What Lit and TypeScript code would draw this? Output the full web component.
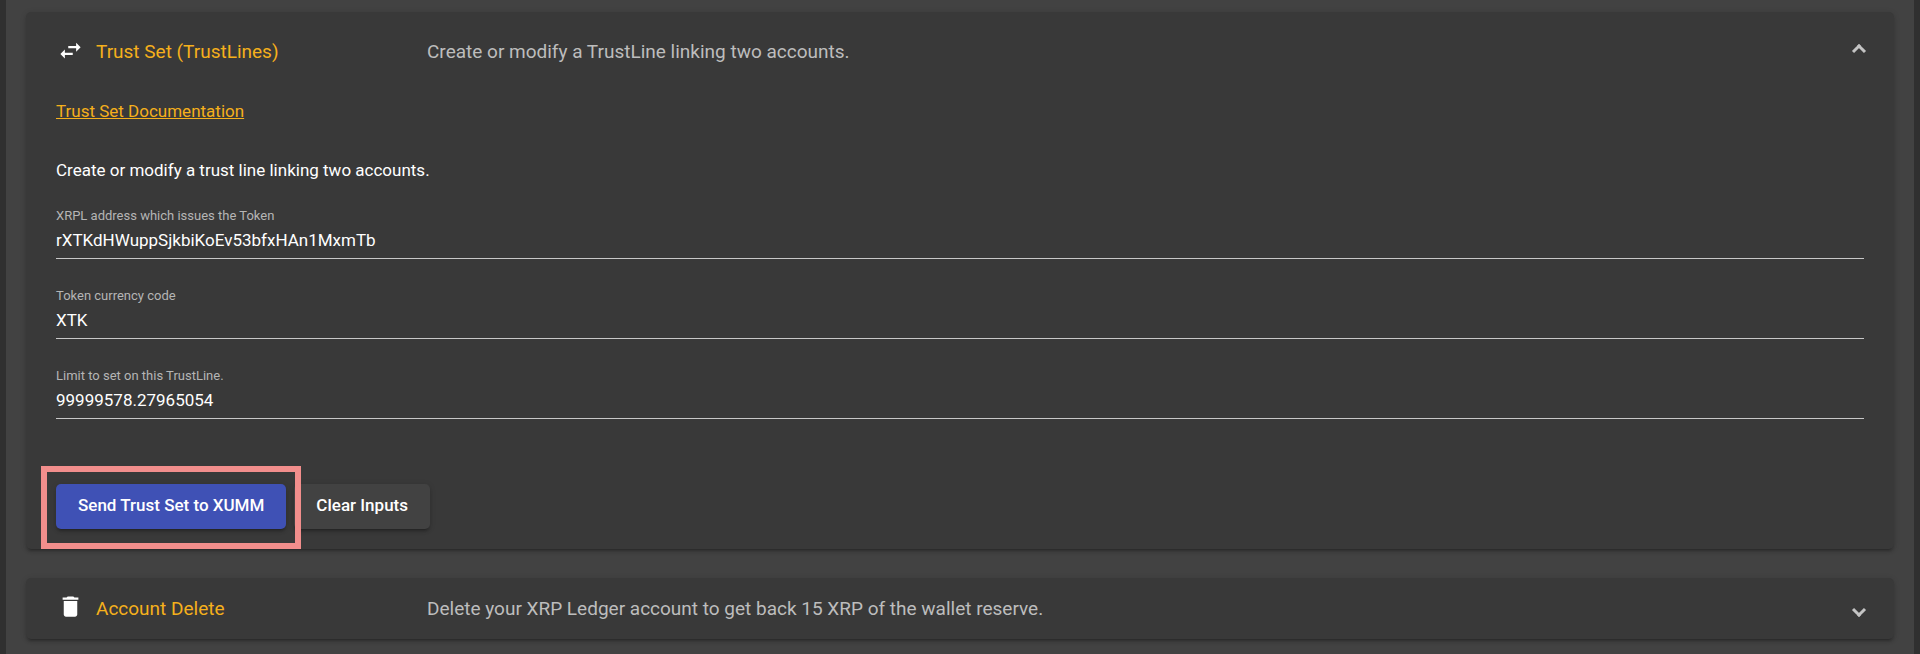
import { LitElement, html, css, svg } from "lit";
import { customElement, property, state } from "lit/decorators.js";

const icons = {
  swap: svg`<path d="M6.99 11L3 15l3.99 4v-3H14v-2H6.99v-3zM21 9l-3.99-4v3H10v2h7.01v3L21 9z"/>`,
  trash: svg`<path d="M6 19c0 1.1.9 2 2 2h8c1.1 0 2-.9 2-2V7H6v12zM19 4h-3.5l-1-1h-5l-1 1H5v2h14V4z"/>`,
};

@customElement("expansion-panel")
class ExpansionPanel extends LitElement {
  @property() heading = "";
  @property() description = "";
  @property() icon: keyof typeof icons = "swap";
  @property({ type: Boolean, reflect: true }) open = false;

  static styles = css`
    :host {
      display: block;
      background: #393939;
      border-radius: 5px;
      box-shadow: 0 4px 2px -3px #0003, 0 3px 3px #00000024, 0 1px 6px #0000001f;
    }
    .header {
      display: flex;
      align-items: center;
      width: 100%;
      height: 61px;
      padding: 0 30px;
      border: 0;
      background: none;
      color: #bdbdbd;
      font: 400 19px/24px Roboto, sans-serif;
      text-align: left;
      cursor: pointer;
    }
    :host([open]) .header {
      height: 80px;
    }
    .title {
      display: flex;
      align-items: center;
      gap: 12px;
      flex: 0 0 371px;
      box-sizing: border-box;
      padding-left: 1px;
      color: #f5b01c;
    }
    .icon {
      width: 27px;
      height: 27px;
      margin-bottom: 4px;
      fill: #fff;
    }
    .description {
      flex: 1;
    }
    .chevron {
      width: 10px;
      height: 10px;
      margin-top: 2px;
      box-sizing: border-box;
      border: solid #c4c4c4;
      border-width: 0 3px 3px 0;
      transform: rotate(45deg);
    }
    :host([open]) .chevron {
      transform: rotate(225deg);
      margin: 0 0 2px;
    }
    .body {
      padding: 0 30px 20px;
    }
  `;

  render() {
    return html`
      <button class="header" aria-expanded=${this.open} @click=${() => (this.open = !this.open)}>
        <span class="title">
          <svg class="icon" viewBox="0 0 24 24" aria-hidden="true">${icons[this.icon]}</svg>
          ${this.heading}
        </span>
        <span class="description">${this.description}</span>
        <span class="chevron"></span>
      </button>
      ${this.open ? html`<div class="body"><slot></slot></div>` : ""}
    `;
  }
}

@customElement("app-root")
class AppRoot extends LitElement {
  @state() fields = [
    { id: "issuer", label: "XRPL address which issues the Token", value: "rXTKdHWuppSjkbiKoEv53bfxHAn1MxmTb" },
    { id: "currency", label: "Token currency code", value: "XTK" },
    { id: "limit", label: "Limit to set on this TrustLine.", value: "99999578.27965054" },
  ];

  static styles = css`
    :host {
      display: block;
      min-height: 100vh;
      box-sizing: border-box;
      padding: 0 6px;
      background: #303030;
      color: #fff;
      font: 400 17px/24px Roboto, sans-serif;
    }
    .surface {
      display: flex;
      flex-direction: column;
      gap: 29px;
      min-height: 100vh;
      box-sizing: border-box;
      padding: 12px 20px;
      background: #424242;
    }
    .link {
      display: inline-block;
      margin-top: 7px;
      color: #f5b01c;
    }
    .intro {
      margin: 35px 0 26px;
    }
    .field {
      display: flex;
      flex-direction: column;
      height: 80px;
    }
    .label {
      color: #b5b5b5;
      font-size: 13px;
      line-height: 16px;
    }
    .input {
      height: 35px;
      padding: 0 0 3px;
      box-sizing: border-box;
      border: 0;
      border-bottom: 1px solid #c8c8c8;
      outline: 0;
      background: none;
      color: inherit;
      font: inherit;
    }
    .actions {
      display: flex;
      gap: 8px;
      margin-top: 36px;
    }
    .button {
      height: 45px;
      padding: 0 22px 3px;
      border: 0;
      border-radius: 5px;
      background: #424242;
      box-shadow: 0 4px 2px -3px #0003, 0 3px 3px #00000024, 0 1px 6px #0000001f;
      color: #fff;
      font: 500 17px/24px Roboto, sans-serif;
      cursor: pointer;
    }
    .primary {
      background: #3f51b5;
    }
    .target {
      position: relative;
      display: flex;
    }
    .highlight {
      position: absolute;
      z-index: 1;
      inset: -18px -15px -20px;
      border: 6px solid #f28e8c;
      pointer-events: none;
    }
  `;

  private edit(id: string, value: string) {
    this.fields = this.fields.map((f) => (f.id === id ? { ...f, value } : f));
  }

  private clear() {
    this.fields = this.fields.map((f) => ({ ...f, value: "" }));
  }

  render() {
    return html`
      <main class="surface">
        <expansion-panel
          open
          icon="swap"
          heading="Trust Set (TrustLines)"
          description="Create or modify a TrustLine linking two accounts."
        >
          <a class="link" href="#trust-set">Trust Set Documentation</a>
          <p class="intro">Create or modify a trust line linking two accounts.</p>
          ${this.fields.map(
            (f) => html`
              <div class="field">
                <label class="label" for=${f.id}>${f.label}</label>
                <input
                  class="input"
                  id=${f.id}
                  .value=${f.value}
                  @input=${(e: Event) => this.edit(f.id, (e.target as HTMLInputElement).value)}
                />
              </div>
            `
          )}
          <div class="actions">
            <div class="target">
              <button class="button primary">Send Trust Set to XUMM</button>
              <span class="highlight"></span>
            </div>
            <button class="button" @click=${this.clear}>Clear Inputs</button>
          </div>
        </expansion-panel>
        <expansion-panel
          icon="trash"
          heading="Account Delete"
          description="Delete your XRP Ledger account to get back 15 XRP of the wallet reserve."
        ></expansion-panel>
      </main>
    `;
  }
}
